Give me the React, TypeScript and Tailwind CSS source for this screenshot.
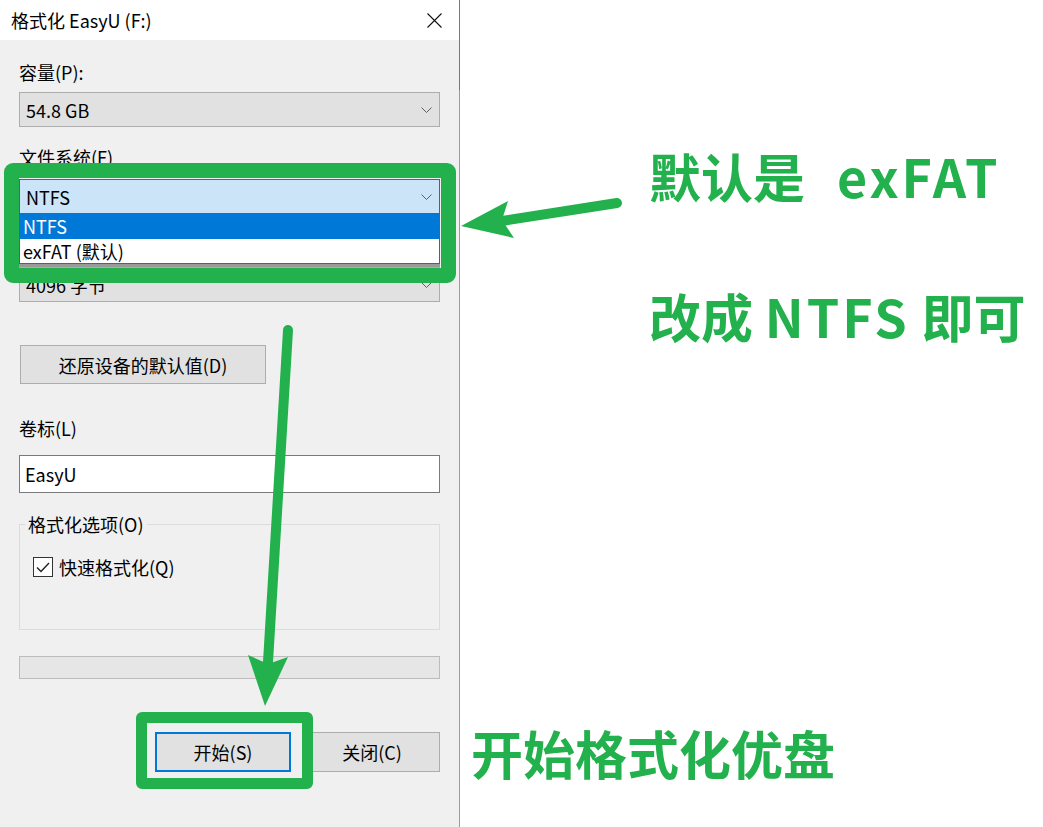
import React from 'react'

const ui = "font-['Noto_Sans_CJK_SC','Noto_Sans',sans-serif]"

function Chevron() {
  return (
    <svg width="11" height="6" viewBox="0 0 11 6" className="shrink-0">
      <polyline points="0.5,0.5 5.5,5.5 10.5,0.5" fill="none" stroke="#5f5f5f" strokeWidth="1" />
    </svg>
  )
}

function Select({ value, active }: { value: string; active?: boolean }) {
  return (
    <div
      className={
        'h-[35px] border flex items-center justify-between pl-[6px] pr-[7px] ' +
        (active ? 'border-[#0078d7] bg-[#cce4f7]' : 'border-[#adadad] bg-[#e1e1e1]')
      }
    >
      <span className="leading-[20px]">{value}</span>
      <Chevron />
    </div>
  )
}

function Label({ children, className = '' }: { children?: React.ReactNode; className?: string }) {
  return <div className={'h-[20px] leading-[20px] ' + className}>{children}</div>
}

export default function App() {
  return (
    <div className={'relative flex w-[1043px] h-[827px] overflow-hidden bg-white text-[18px] text-black ' + ui}>
      {/* dialog */}
      <div className="w-[459px] h-full flex flex-col bg-[#f0f0f0]">
        <div className="h-[40px] bg-white flex items-center justify-between pl-[11px] pr-[17px]">
          <span className="leading-[20px]">格式化 EasyU (F:)</span>
          <svg width="15" height="15" viewBox="0 0 15 15">
            <path d="M0.5 0.5 L14.5 14.5 M14.5 0.5 L0.5 14.5" stroke="#111" strokeWidth="1.1" />
          </svg>
        </div>

        <div className="flex flex-col pl-[19px] pr-[19px]">
          <Label className="mt-[22px]">容量(P):</Label>
          <div className="mt-[10px]">
            <Select value="54.8 GB" />
          </div>

          <Label className="mt-[20px]">文件系统(F)</Label>
          <div className="relative mt-[12px]">
            <Select value="NTFS" active />
            <div className="absolute left-0 right-0 top-full z-10 border border-[#0078d7] border-t-0 bg-white shadow-[0_3px_0_#9a9a9a]">
              <div className="h-[25px] leading-[25px] bg-[#0078d7] text-white pl-[3px]">NTFS</div>
              <div className="h-[24px] leading-[24px] pl-[3px]">exFAT (默认)</div>
            </div>
          </div>

          {/* allocation unit label sits under the open list */}
          <Label className="mt-[20px]" />
          <div className="mt-[13px]">
            <Select value="4096 字节" />
          </div>

          <button className="mt-[43px] w-[246px] h-[39px] ml-[1px] border border-[#adadad] bg-[#e1e1e1] leading-[20px]">
            还原设备的默认值(D)
          </button>

          <Label className="mt-[34px]">卷标(L)</Label>
          <div className="mt-[17px] h-[38px] border border-[#7a7a7a] bg-white flex items-center pl-[5px]">
            <span className="leading-[20px]">EasyU</span>
          </div>

          <fieldset className="mt-[21px] h-[116px] border border-[#dcdcdc] px-[13px]">
            <legend className="ml-[-8px] px-[3px] leading-[20px]">格式化选项(O)</legend>
            <div className="mt-[23px] flex items-center gap-[6px]">
              <div className="w-[20px] h-[20px] border border-[#333] bg-white flex items-center justify-center">
                <svg width="14" height="11" viewBox="0 0 14 11">
                  <polyline points="1,5.5 5,9.5 13,1" fill="none" stroke="#222" strokeWidth="1.4" />
                </svg>
              </div>
              <span className="leading-[20px]">快速格式化(Q)</span>
            </div>
          </fieldset>

          <div className="mt-[26px] h-[23px] border border-[#bcbcbc] bg-[#e6e6e6]" />

          <div className="mt-[53px] flex justify-end gap-[13px]">
            <button className="w-[136px] h-[40px] border-2 border-[#0078d7] bg-[#e1e1e1] leading-[20px]">开始(S)</button>
            <button className="w-[136px] h-[40px] border border-[#adadad] bg-[#e1e1e1] leading-[20px]">关闭(C)</button>
          </div>
        </div>
      </div>

      <div className="w-[1px] h-full flex flex-col">
        <div className="h-[90px] bg-[#3a8fa8]" />
        <div className="flex-1 bg-[#9a9a9a]" />
      </div>

      {/* annotation text */}
      <div className="flex-1 flex flex-col font-bold text-[#22b14c] text-[52px] leading-[60px]">
        <div className="mt-[146px] ml-[189px] whitespace-nowrap">
          默认是<span className="ml-[32px] tracking-[3px]">exFAT</span>
        </div>
        <div className="mt-[80px] ml-[189px] whitespace-nowrap">
          改成 <span className="tracking-[3px]">NTFS</span> 即可
        </div>
        <div className="mt-[377px] ml-[11px] whitespace-nowrap">开始格式化优盘</div>
      </div>

      {/* highlight boxes */}
      <div className="absolute left-[4px] top-[163px] w-[452px] h-[120px] border-[15px] border-[#22b14c] rounded-[9px] z-20" />
      <div className="absolute left-[136px] top-[712px] w-[177px] h-[77px] border-[11px] border-[#22b14c] rounded-[6px] z-20" />

      {/* arrows */}
      <svg className="absolute inset-0 z-20 pointer-events-none" width="1043" height="827" viewBox="0 0 1043 827">
        <line x1="617" y1="203" x2="502" y2="221" stroke="#22b14c" strokeWidth="10" strokeLinecap="round" />
        <polygon points="461,226 508,201 502,220 514,238" fill="#22b14c" />
        <line x1="288" y1="330" x2="268" y2="662" stroke="#22b14c" strokeWidth="10" strokeLinecap="round" />
        <polygon points="265,706 248,655 268,664 288,657" fill="#22b14c" />
      </svg>
    </div>
  )
}
